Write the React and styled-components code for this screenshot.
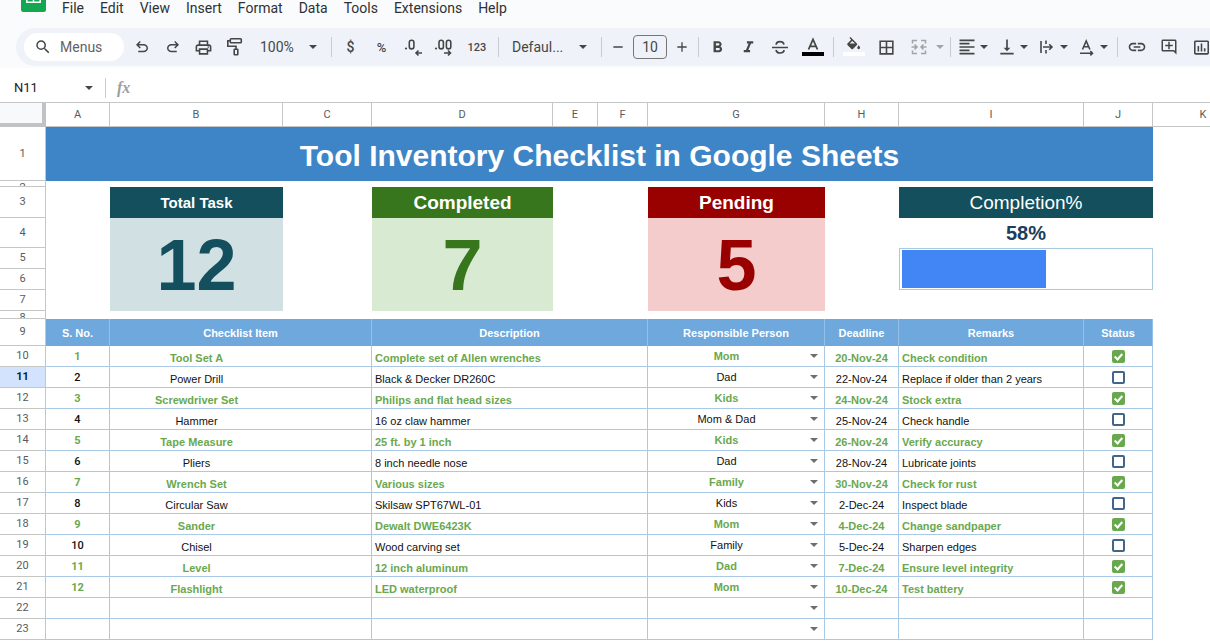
import React from "react";
import styled, { createGlobalStyle, css } from "styled-components";
import {
  MdSearch,
  MdOutlinePrint,
  MdFormatBold,
  MdFormatItalic,
  MdBorderAll,
  MdFormatAlignLeft,
  MdVerticalAlignBottom,
  MdLink,
  MdOutlineAddComment,
  MdInsertChartOutlined,
  MdAdd,
  MdRemove,
} from "react-icons/md";

const ui = '"Roboto", "Liberation Sans", sans-serif';
const sheet = '"Liberation Sans", Arial, sans-serif';

const GlobalStyle = createGlobalStyle`
  *, *::before, *::after { box-sizing: border-box; }
  html, body { margin: 0; background: #ffffff; }
  button, input, select { font: inherit; color: inherit; margin: 0; padding: 0; border: 0; background: none; }
`;

const Page = styled.div`
  display: flex;
  flex-direction: column;
  height: 100vh;
  overflow: hidden;
  font-family: ${ui};
  color: #444746;
`;

/* ---------- top chrome ---------- */

const Chrome = styled.header`
  flex: none;
  background: #f9fbfd;
  padding-bottom: 2px;
`;

const MenuBar = styled.nav`
  display: flex;
  align-items: flex-start;
  gap: 16px;
  height: 28px;
  padding-left: 21px;
`;

const MenuItem = styled.button`
  flex: none;
  height: 16px;
  line-height: 16px;
  font-size: 14px;
  color: #303134;
`;

const Toolbar = styled.div`
  display: flex;
  align-items: center;
  height: 38px;
  margin-left: 16px;
  padding-left: 8px;
  border-radius: 19px 0 0 19px;
  background: #eff3f9;
  overflow: hidden;
`;

const SearchBox = styled.label`
  flex: none;
  display: flex;
  align-items: center;
  gap: 8px;
  width: 100px;
  height: 28px;
  margin-right: 2px;
  padding-left: 10px;
  border-radius: 14px;
  background: #ffffff;
  font-size: 14px;
`;

const SearchInput = styled.input`
  width: 60px;
  outline: none;
  &::placeholder { color: #5f6368; opacity: 1; }
`;

const ToolButton = styled.button`
  flex: none;
  display: flex;
  align-items: center;
  justify-content: center;
  width: ${(p) => p.$width || 31}px;
  height: 30px;
  font-size: ${(p) => p.$size || 14}px;
  font-weight: ${(p) => (p.$size ? 500 : 400)};
`;

const SplitButton = styled.button`
  flex: none;
  display: flex;
  align-items: center;
  gap: ${(p) => (p.$wide ? 6 : 2)}px;
  height: 30px;
  padding: ${(p) => (p.$wide ? "0 2px 0 6px" : "0 5px 0 3px")};
  opacity: ${(p) => (p.$muted ? 0.45 : 1)};
`;

const MenuButton = styled.button`
  flex: none;
  display: flex;
  align-items: center;
  justify-content: space-between;
  width: ${(p) => p.$width}px;
  height: 30px;
  padding: 0 10px;
  font-size: 14px;
`;

const Divider = styled.span`
  flex: none;
  width: 1px;
  height: 20px;
  margin: 0 3px;
  background: #c7cacf;
`;

const SizeInput = styled.input`
  flex: none;
  width: 34px;
  height: 24px;
  margin: 0 2px;
  border: 1px solid #747775;
  border-radius: 4px;
  text-align: center;
  font-size: 14px;
`;

const FormulaBar = styled.div`
  flex: none;
  display: flex;
  align-items: center;
  gap: 8px;
  height: 35px;
  padding: 5px 0 0 14px;
  border-bottom: 1px solid #c4c7c5;
`;

const NameBox = styled.input`
  width: 62px;
  font-size: 13px;
  color: #202124;
`;

const FormulaInput = styled.input`
  flex: 1;
  height: 24px;
  outline: none;
`;

const FxMark = styled.span`
  font-family: "Liberation Serif", serif;
  font-style: italic;
  font-weight: 700;
  font-size: 16px;
  color: #9aa0a6;
`;

/* ---------- sheet ---------- */

const SheetArea = styled.main`
  flex: 1;
  min-height: 0;
  overflow: hidden;
`;

const Grid = styled.table`
  table-layout: fixed;
  width: 1254px;
  border-collapse: separate;
  border-spacing: 0;
  font-family: ${sheet};
  font-size: 11px;
  line-height: 14px;

  th, td { padding: 0; }
`;

const Row = styled.tr`
  height: ${(p) => p.$height}px;
`;

const Corner = styled.td`
  background: #f8f9fa;
  border-right: 4px solid #c0c2c4;
  border-bottom: 4px solid #c0c2c4;
`;

const ColumnHead = styled.th`
  border-right: 1px solid #c4c7c5;
  border-bottom: 1px solid #c4c7c5;
  font-family: ${ui};
  font-weight: 400;
  color: #575b5f;
`;

const RowHead = styled.th`
  border-right: 1px solid #c4c7c5;
  border-bottom: 1px solid #c4c7c5;
  font-family: ${ui};
  font-weight: ${(p) => (p.$active ? 700 : 400)};
  color: ${(p) => (p.$active ? "#041e49" : "#575b5f")};
  background: ${(p) => (p.$active ? "#d3e3fd" : "#ffffff")};
`;

const RowNumber = styled.div`
  display: flex;
  justify-content: center;
  max-height: ${(p) => p.$max}px;
  overflow: hidden;
`;

const TitleCell = styled.td`
  background: #3d85c6;
  color: #ffffff;
  text-align: center;
  h1 { margin: 0; font-size: 30px; line-height: 34px; padding-top: 4px; }
`;

const CardHead = styled.th`
  background: ${(p) => p.$color};
  color: #ffffff;
  font-size: ${(p) => p.$size || 19}px;
  font-weight: ${(p) => p.$weight || 700};
  line-height: 24px;
`;

const CardValue = styled.td`
  background: ${(p) => p.$fill};
  color: ${(p) => p.$color};
  text-align: center;
  font-size: 72px;
  font-weight: 700;
  line-height: 80px;
`;

const Percent = styled.td`
  text-align: center;
  font-size: 20px;
  font-weight: 700;
  line-height: 24px;
  color: #1c3d5e;
`;

const ProgressCell = styled.td`
  border: 1px solid #a9cbe0;
`;

const Progress = styled.div`
  height: 38px;
  margin: 0 2px;
`;

const ProgressFill = styled.div`
  height: 100%;
  background: #4285f4;
`;

const HeadCell = styled.th`
  background: #6fa8dc;
  border-right: 1px solid #94bfe6;
  color: #ffffff;
  font-size: 11px;
  font-weight: 700;
`;

const Cell = styled.td`
  border-right: 1px solid #a9c9e6;
  border-bottom: 1px solid #a9c9e6;
  text-align: ${(p) => (p.$left ? "left" : "center")};
  vertical-align: ${(p) => (p.$low ? "bottom" : "middle")};
  color: ${(p) => (p.$done ? "#6aa84f" : "#111111")};
  font-weight: ${(p) => (p.$done ? 700 : 400)};
  ${(p) => p.$low && css`&& { padding-bottom: 1px; }`}
  ${(p) => p.$left && css`&& { padding-left: 3px; }`}
`;

const NumberText = styled.span`
  font-family: ${ui};
  font-weight: ${(p) => (p.$done ? 700 : 500)};
`;

/* Item names are centred over column B, the first of the two merged columns. */
const ItemName = styled.div`
  width: 173px;
`;

const Picker = styled.div`
  display: flex;
  align-items: center;
  gap: 4px;
  padding-right: 5px;
`;

const PersonSelect = styled.select`
  flex: 1;
  min-width: 0;
  height: 18px;
  appearance: none;
  text-align: center;
  text-align-last: center;
  outline: none;
`;

const Check = styled.input`
  appearance: none;
  display: block;
  width: 13px;
  height: 13px;
  margin: 0 auto;
  border: 2px solid #44658a;
  border-radius: 2px;

  &:checked {
    display: flex;
    justify-content: center;
    border-color: #6aa84f;
    background: #6aa84f;
  }
  &:checked::before {
    content: "";
    width: 5px;
    height: 8px;
    border: solid #ffffff;
    border-width: 0 2px 2px 0;
    transform: rotate(42deg);
  }
`;

/* ---------- icons ---------- */

const Caret = ({ color = "currentColor" }) => (
  <svg width="10" height="10" viewBox="0 0 10 10" aria-hidden="true">
    <path d="M1 3h8L5 7z" fill={color} />
  </svg>
);

const Symbol = ({ d }) => (
  <svg width="18" height="18" viewBox="0 -960 960 960" fill="currentColor" aria-hidden="true">
    <path d={d} />
  </svg>
);

const undoPath =
  "M280-200v-80h284q63 0 109.5-40T720-420q0-60-46.5-100T564-560H312l104 104-56 56-200-200 200-200 56 56-104 104h252q97 0 166.5 63T800-420q0 94-69.5 157T564-200H280Z";
const redoPath =
  "M396-200q-97 0-166.5-63T160-420q0-94 69.5-157T396-640h252L544-744l56-56 200 200-200 200-56-56 104-104H396q-63 0-109.5 40T240-420q0 60 46.5 100T396-280h284v80H396Z";

const Line = ({ children, width = 20, height = 20, stroke = 1.8 }) => (
  <svg
    width={width}
    height={height}
    viewBox={`0 0 ${width} ${height}`}
    fill="none"
    stroke="currentColor"
    strokeWidth={stroke}
    aria-hidden="true"
  >
    {children}
  </svg>
);

const SheetsLogo = () => (
  <svg width="25" height="12" viewBox="0 0 25 12" aria-label="Sheets">
    <path d="M0 0h25v9.5a2.500 2.500 0 0 1-2.500 2.500h-20A2.500 2.500 0 0 1 0 9.500z" fill="#12a750" />
    <path d="M5.800 0v2.300h13.400V0M12.500 0v2.300" fill="none" stroke="#fff" strokeWidth="1.500" />
  </svg>
);

const PaintIcon = () => (
  <Line stroke={1.6}>
    <rect x="5.300" y="1.800" width="11" height="4" rx="0.800" />
    <path d="M5 3.800H2.800v5.400H11v3" />
    <rect x="9.200" y="12.200" width="3.600" height="5.600" rx="0.600" />
  </Line>
);

const DecreaseIcon = () => (
  <Line stroke={1.6}>
    <circle cx="3" cy="11.500" r="1.100" fill="currentColor" stroke="none" />
    <rect x="6.300" y="3.300" width="4.600" height="8.600" rx="2.200" />
    <path d="M19 16h-6M15.500 13.500L13 16l2.500 2.500" />
  </Line>
);

const IncreaseIcon = () => (
  <Line stroke={1.6}>
    <circle cx="2" cy="11.500" r="1.100" fill="currentColor" stroke="none" />
    <rect x="5" y="3.300" width="4.400" height="8.600" rx="2.200" />
    <rect x="12.400" y="3.300" width="4.400" height="8.600" rx="2.200" />
    <path d="M10 16h6.500M14 13.500l2.500 2.500-2.500 2.500" />
  </Line>
);

const StrikeIcon = () => (
  <Line stroke={1.7}>
    <path d="M2 10.500h16" />
    <path d="M14 7.500C13.500 5.500 12 4.700 10 4.700S6.200 5.800 6.200 7.700M6 13c.4 2 2 3 4 3s4-1 4-2.900" />
  </Line>
);

const TextColorIcon = () => (
  <svg width="24" height="20" viewBox="0 0 24 20" aria-hidden="true">
    <path d="M7.500 12.500L12 2.500l4.500 10M9 9.300h6" fill="none" stroke="#444746" strokeWidth="1.800" />
    <rect x="1" y="15" width="22" height="4" fill="#000" />
  </svg>
);

const FillIcon = () => (
  <svg width="24" height="20" viewBox="0 0 24 20" aria-hidden="true">
    <g transform="translate(3 0) scale(.72)" fill="#444746">
      <path d="M16.560 8.940L7.620 0 6.210 1.410l2.380 2.380-5.150 5.150c-.59.59-.59 1.540 0 2.120l5.500 5.500c.29.29.68.44 1.060.44s.77-.15 1.060-.44l5.500-5.500c.59-.58.59-1.530 0-2.120zM6.500 9.200L10 5.500l4 3.700zM19 11.500s-2 2.170-2 3.500c0 1.100.9 2 2 2s2-.9 2-2c0-1.330-2-3.500-2-3.500z" />
    </g>
    <rect x="1" y="15" width="22" height="4" fill="#fff" />
  </svg>
);

const MergeIcon = () => (
  <Line stroke={1.5}>
    <path d="M8 3.500H3.500V6.500M12 3.500h4.500V6.500M8 16.500H3.500V13.500M12 16.500h4.500V13.500" />
    <path d="M2.500 10h5M12.500 10h5M5.500 7.500L8 10l-2.500 2.500M14.500 7.500L12 10l2.500 2.500" />
  </Line>
);

const WrapIcon = () => (
  <Line stroke={1.6}>
    <path d="M4 4v12M9 3.500v3.500M9 13v3.500M6 10h9M12.200 7.200L15 10l-2.800 2.800" />
  </Line>
);

const RotateIcon = () => (
  <Line stroke={1.6}>
    <path d="M5.500 12.500l3.700-8.500 3.700 8.500M6.800 9.700h4.800M3 16.200h12.500M13.300 14l2.200 2.200-2.200 2.200" />
  </Line>
);

/* ---------- data ---------- */

const menus = ["File", "Edit", "View", "Insert", "Format", "Data", "Tools", "Extensions", "Help"];

const columns = [
  ["A", 64],
  ["B", 173],
  ["C", 89],
  ["D", 181],
  ["E", 45],
  ["F", 50],
  ["G", 177],
  ["H", 74],
  ["I", 185],
  ["J", 69],
  ["K", 101],
];

const people = ["", "Mom", "Dad", "Kids", "Mom & Dad", "Family"];

const items = [
  ["Tool Set A", "Complete set of Allen wrenches", "Mom", "20-Nov-24", "Check condition", true],
  ["Power Drill", "Black & Decker DR260C", "Dad", "22-Nov-24", "Replace if older than 2 years", false],
  ["Screwdriver Set", "Philips and flat head sizes", "Kids", "24-Nov-24", "Stock extra", true],
  ["Hammer", "16 oz claw hammer", "Mom & Dad", "25-Nov-24", "Check handle", false],
  ["Tape Measure", "25 ft. by 1 inch", "Kids", "26-Nov-24", "Verify accuracy", true],
  ["Pliers", "8 inch needle nose", "Dad", "28-Nov-24", "Lubricate joints", false],
  ["Wrench Set", "Various sizes", "Family", "30-Nov-24", "Check for rust", true],
  ["Circular Saw", "Skilsaw SPT67WL-01", "Kids", "2-Dec-24", "Inspect blade", false],
  ["Sander", "Dewalt DWE6423K", "Mom", "4-Dec-24", "Change sandpaper", true],
  ["Chisel", "Wood carving set", "Family", "5-Dec-24", "Sharpen edges", false],
  ["Level", "12 inch aluminum", "Dad", "7-Dec-24", "Ensure level integrity", true],
  ["Flashlight", "LED waterproof", "Mom", "10-Dec-24", "Test battery", true],
  null,
  null,
];

const completion = 58;

function RowLabel({ n, max, active }) {
  return (
    <RowHead scope="row" $active={active}>
      <RowNumber $max={max || 20}>{n}</RowNumber>
    </RowHead>
  );
}

function ItemRow({ item, index }) {
  const [name, description, person, deadline, remarks, done] = item || ["", "", "", "", "", false];
  const rowNumber = index + 10;
  return (
    <Row $height={21}>
      <RowLabel n={rowNumber} active={rowNumber === 11} />
      <Cell $done={done}>{item && <NumberText $done={done}>{index + 1}</NumberText>}</Cell>
      <Cell colSpan={2} $done={done} $low>
        <ItemName>{name}</ItemName>
      </Cell>
      <Cell colSpan={3} $left $low $done={done}>{description}</Cell>
      <Cell $done={done}>
        <Picker>
          <PersonSelect aria-label={`Responsible person, row ${rowNumber}`} defaultValue={person}>
            {people.map((p) => (
              <option key={p} value={p}>{p}</option>
            ))}
          </PersonSelect>
          <Caret color="#6b6f73" />
        </Picker>
      </Cell>
      <Cell $done={done} $low>{deadline}</Cell>
      <Cell $left $low $done={done}>{remarks}</Cell>
      <Cell>
        {item && <Check type="checkbox" aria-label={`${name} done`} defaultChecked={done} />}
      </Cell>
      <td />
    </Row>
  );
}

export default function App() {
  return (
    <Page>
      <GlobalStyle />
      <Chrome>
        <MenuBar>
          <SheetsLogo />
          {menus.map((m) => (
            <MenuItem key={m}>{m}</MenuItem>
          ))}
        </MenuBar>
        <Toolbar>
          <SearchBox>
            <MdSearch size={18} />
            <SearchInput placeholder="Menus" aria-label="Search the menus" />
          </SearchBox>
          <ToolButton aria-label="Undo"><Symbol d={undoPath} /></ToolButton>
          <ToolButton aria-label="Redo"><Symbol d={redoPath} /></ToolButton>
          <ToolButton aria-label="Print"><MdOutlinePrint size={19} /></ToolButton>
          <ToolButton aria-label="Paint format"><PaintIcon /></ToolButton>
          <MenuButton $width={78}>100%<Caret /></MenuButton>
          <Divider />
          <ToolButton $size={14}>$</ToolButton>
          <ToolButton $size={13}>%</ToolButton>
          <ToolButton aria-label="Decrease decimal places"><DecreaseIcon /></ToolButton>
          <ToolButton aria-label="Increase decimal places"><IncreaseIcon /></ToolButton>
          <ToolButton $width={36} $size={11}>123</ToolButton>
          <Divider />
          <MenuButton $width={96}>Defaul...<Caret /></MenuButton>
          <Divider />
          <ToolButton $width={26} aria-label="Decrease font size"><MdRemove size={16} /></ToolButton>
          <SizeInput defaultValue="10" aria-label="Font size" />
          <ToolButton $width={26} aria-label="Increase font size"><MdAdd size={16} /></ToolButton>
          <Divider />
          <ToolButton aria-label="Bold"><MdFormatBold size={19} /></ToolButton>
          <ToolButton aria-label="Italic"><MdFormatItalic size={19} /></ToolButton>
          <ToolButton aria-label="Strikethrough"><StrikeIcon /></ToolButton>
          <ToolButton $width={35} aria-label="Text colour"><TextColorIcon /></ToolButton>
          <Divider />
          <ToolButton $width={33} aria-label="Fill colour"><FillIcon /></ToolButton>
          <ToolButton $width={33} aria-label="Borders"><MdBorderAll size={19} /></ToolButton>
          <SplitButton $wide $muted aria-label="Merge cells"><MergeIcon /><Caret /></SplitButton>
          <Divider />
          <SplitButton aria-label="Horizontal align"><MdFormatAlignLeft size={20} /><Caret /></SplitButton>
          <SplitButton aria-label="Vertical align"><MdVerticalAlignBottom size={20} /><Caret /></SplitButton>
          <SplitButton aria-label="Text wrapping"><WrapIcon /><Caret /></SplitButton>
          <SplitButton aria-label="Text rotation"><RotateIcon /><Caret /></SplitButton>
          <Divider />
          <ToolButton $width={32} aria-label="Insert link"><MdLink size={20} /></ToolButton>
          <ToolButton $width={32} aria-label="Insert comment"><MdOutlineAddComment size={18} /></ToolButton>
          <ToolButton $width={32} aria-label="Insert chart"><MdInsertChartOutlined size={19} /></ToolButton>
        </Toolbar>
      </Chrome>

      <FormulaBar>
        <NameBox defaultValue="N11" aria-label="Cell name" />
        <Caret />
        <Divider />
        <FxMark>fx</FxMark>
        <FormulaInput aria-label="Formula" />
      </FormulaBar>

      <SheetArea>
        <Grid>
          <colgroup>
            <col width="46" />
            {columns.map(([c, w]) => (
              <col key={c} width={w} />
            ))}
          </colgroup>
          <thead>
            <Row $height={24}>
              <Corner />
              {columns.map(([c]) => (
                <ColumnHead key={c} scope="col">{c}</ColumnHead>
              ))}
            </Row>
          </thead>
          <tbody>
            <Row $height={54}>
              <RowLabel n={1} />
              <TitleCell colSpan={10}>
                <h1>Tool Inventory Checklist in Google Sheets</h1>
              </TitleCell>
              <td />
            </Row>
            <Row $height={6}>
              <RowLabel n={2} max={5} />
              <td colSpan={11} />
            </Row>
            <Row $height={31}>
              <RowLabel n={3} />
              <td />
              <CardHead $color="#134f5c" $size={15}>Total Task</CardHead>
              <td />
              <CardHead $color="#38761d">Completed</CardHead>
              <td colSpan={2} />
              <CardHead $color="#990000">Pending</CardHead>
              <td />
              <CardHead colSpan={2} $color="#134f5c" $weight={400}>Completion%</CardHead>
              <td />
            </Row>
            <Row $height={30}>
              <RowLabel n={4} />
              <td />
              <CardValue rowSpan={4} $fill="#d0e0e3" $color="#134f5c">12</CardValue>
              <td />
              <CardValue rowSpan={4} $fill="#d9ead3" $color="#38761d">7</CardValue>
              <td colSpan={2} />
              <CardValue rowSpan={4} $fill="#f4cccc" $color="#990000">5</CardValue>
              <td />
              <Percent colSpan={2}>{completion}%</Percent>
              <td />
            </Row>
            <Row $height={21}>
              <RowLabel n={5} />
              <td />
              <td />
              <td colSpan={2} />
              <td />
              <ProgressCell colSpan={2} rowSpan={2}>
                <Progress
                  role="progressbar"
                  aria-label="Completion"
                  aria-valuenow={completion}
                  aria-valuemin={0}
                  aria-valuemax={100}
                >
                  <ProgressFill style={{ width: `${completion}%` }} />
                </Progress>
              </ProgressCell>
              <td />
            </Row>
            <Row $height={21}>
              <RowLabel n={6} />
              <td />
              <td />
              <td colSpan={2} />
              <td />
              <td />
            </Row>
            <Row $height={21}>
              <RowLabel n={7} />
              <td />
              <td />
              <td colSpan={2} />
              <td colSpan={4} />
            </Row>
            <Row $height={8}>
              <RowLabel n={8} max={7} />
              <td colSpan={11} />
            </Row>
            <Row $height={27}>
              <RowLabel n={9} />
              <HeadCell>S. No.</HeadCell>
              <HeadCell colSpan={2}>Checklist Item</HeadCell>
              <HeadCell colSpan={3}>Description</HeadCell>
              <HeadCell>Responsible Person</HeadCell>
              <HeadCell>Deadline</HeadCell>
              <HeadCell>Remarks</HeadCell>
              <HeadCell>Status</HeadCell>
              <td />
            </Row>
            {items.map((item, i) => (
              <ItemRow key={i} item={item} index={i} />
            ))}
          </tbody>
        </Grid>
      </SheetArea>
    </Page>
  );
}
